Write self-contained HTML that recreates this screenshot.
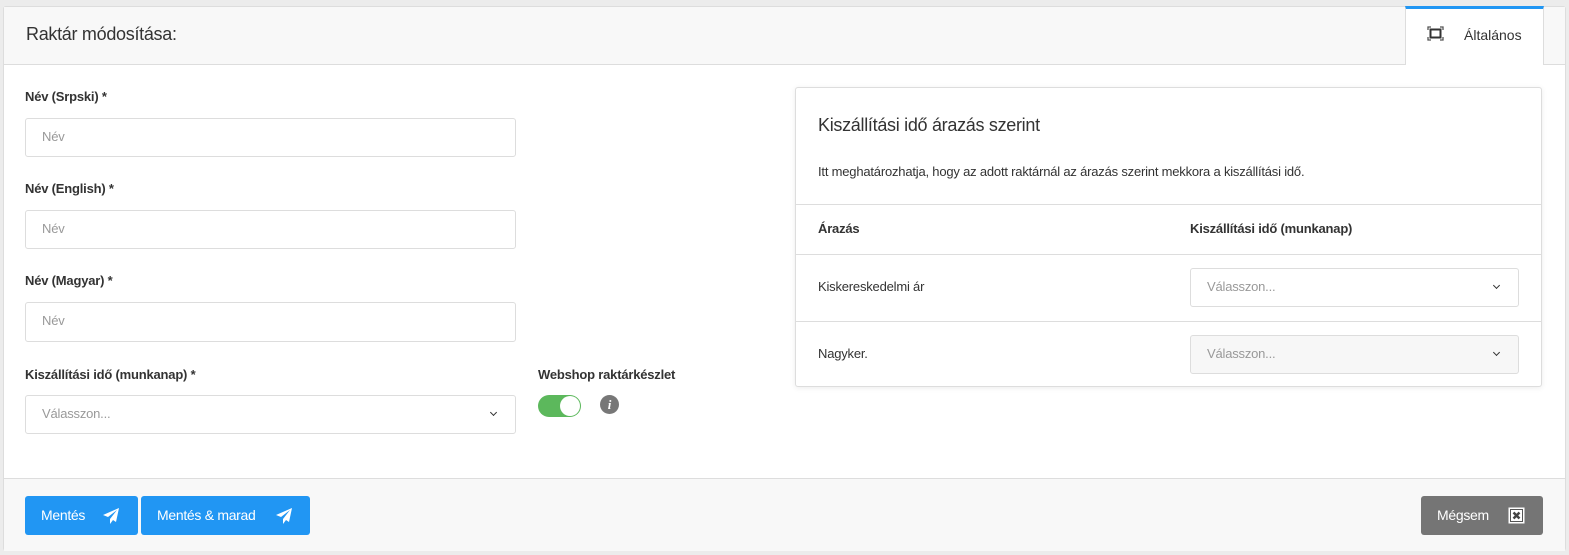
<!DOCTYPE html>
<html><head><meta charset="utf-8"><style>
*{box-sizing:border-box;margin:0;padding:0}
body{width:1569px;height:555px;background:#ececec;font-family:"Liberation Sans",sans-serif;color:#333;position:relative;overflow:hidden}
.card{position:absolute;left:3px;top:6px;width:1563px;height:545px;background:#fff;border:1px solid #ddd;border-radius:3px}
.hdr{position:absolute;left:0;top:0;width:100%;height:58px;background:#f8f8f8;border-bottom:1px solid #ddd}
.ttl{position:absolute;left:22px;top:17px;font-size:18px;color:#333;letter-spacing:-0.3px}
.tab{position:absolute;left:1401px;top:-1px;width:139px;height:59px;background:#fff;border-top:3px solid #2196f3;border-left:1px solid #ddd;border-right:1px solid #ddd}
.tab span{position:absolute;left:58px;top:18px;font-size:14px;color:#333}
.lbl{position:absolute;font-size:13px;font-weight:bold;color:#333;letter-spacing:-0.2px}
.inp{position:absolute;border:1px solid #ddd;border-radius:3px;background:#fff;font-size:13px;color:#999;padding-left:16px;line-height:36px;letter-spacing:-0.2px}
.chev{position:absolute;right:19px;top:14px;width:5px;height:5px;border-right:1.5px solid #333;border-bottom:1.5px solid #333;transform:rotate(45deg)}
.panel{position:absolute;left:791px;top:80px;width:747px;height:300px;border:1px solid #ddd;border-radius:3px;background:#fff;box-shadow:0 1px 6px rgba(0,0,0,.08)}
.hr{position:absolute;left:0;width:100%;border-top:1px solid #ddd}
.ftr{position:absolute;left:0;top:471px;width:100%;height:73px;background:#f8f8f8;border-top:1px solid #ddd}
.btn{position:absolute;top:17px;height:39px;background:#2196f3;color:#fff;font-size:14px;border-radius:3px;line-height:39px;padding-left:16px;letter-spacing:-0.3px}
</style></head><body>
<div class="card">
 <div class="hdr"><div class="ttl">Raktár módosítása:</div>
  <div class="tab">
   <svg style="position:absolute;left:21px;top:17px" width="17" height="15" viewBox="0 0 17 15"><path d="M1 4V1h3M13 1h3v3M16 11v3h-3M4 14H1v-3" fill="none" stroke="#555" stroke-width="1.3"/><rect x="3.5" y="3.5" width="10" height="8" fill="none" stroke="#333" stroke-width="2"/></svg>
   <span>Általános</span></div>
 </div>
 <div class="lbl" style="left:21px;top:82px">Név (Srpski) *</div>
 <div class="inp" style="left:21px;top:111px;width:491px;height:39px">Név</div>
 <div class="lbl" style="left:21px;top:174px">Név (English) *</div>
 <div class="inp" style="left:21px;top:203px;width:491px;height:39px">Név</div>
 <div class="lbl" style="left:21px;top:266px">Név (Magyar) *</div>
 <div class="inp" style="left:21px;top:295px;width:491px;height:40px">Név</div>
 <div class="lbl" style="left:21px;top:360px">Kiszállítási idő (munkanap) *</div>
 <div class="inp" style="left:21px;top:388px;width:491px;height:39px">Válasszon...<div class="chev"></div></div>
 <div class="lbl" style="left:534px;top:360px">Webshop raktárkészlet</div>
 <div style="position:absolute;left:534px;top:388px;width:43px;height:22px;border-radius:11px;background:#5cb85c"><div style="position:absolute;right:1px;top:1px;width:20px;height:20px;border-radius:50%;background:#fff"></div></div>
 <div style="position:absolute;left:596px;top:388px;width:19px;height:19px;border-radius:50%;background:#777;color:#fff;font:italic bold 13px 'Liberation Serif',serif;text-align:center;line-height:19px">i</div>
 <div class="panel">
  <div style="position:absolute;left:22px;top:27px;font-size:18px;color:#333;letter-spacing:-0.3px">Kiszállítási idő árazás szerint</div>
  <div style="position:absolute;left:22px;top:76px;font-size:13px;color:#333;letter-spacing:-0.2px">Itt meghatározhatja, hogy az adott raktárnál az árazás szerint mekkora a kiszállítási idő.</div>
  <div class="hr" style="top:116px"></div>
  <div class="lbl" style="left:22px;top:133px">Árazás</div>
  <div class="lbl" style="left:394px;top:133px">Kiszállítási idő (munkanap)</div>
  <div class="hr" style="top:166px"></div>
  <div style="position:absolute;left:22px;top:191px;font-size:13px;letter-spacing:-0.2px">Kiskereskedelmi ár</div>
  <div class="inp" style="left:394px;top:180px;width:329px;height:39px">Válasszon...<div class="chev"></div></div>
  <div class="hr" style="top:233px"></div>
  <div style="position:absolute;left:22px;top:258px;font-size:13px;letter-spacing:-0.2px">Nagyker.</div>
  <div class="inp" style="left:394px;top:247px;width:329px;height:39px;background:#f7f7f7">Válasszon...<div class="chev"></div></div>
 </div>
 <div class="ftr">
  <div class="btn" style="left:21px;width:113px">Mentés
   <svg style="position:absolute;left:77px;top:11px" width="18" height="18" viewBox="0 0 18 18"><path d="M17 1L1 8l5 2 9-7-7 9v5l3-4 3 2z" fill="#fff"/></svg></div>
  <div class="btn" style="left:137px;width:169px">Mentés &amp; marad
   <svg style="position:absolute;left:134px;top:11px" width="18" height="18" viewBox="0 0 18 18"><path d="M17 1L1 8l5 2 9-7-7 9v5l3-4 3 2z" fill="#fff"/></svg></div>
  <div class="btn" style="left:1417px;width:122px;background:#757575">Mégsem
   <svg style="position:absolute;left:87px;top:11px" width="17" height="17" viewBox="0 0 17 17"><rect x="0.5" y="0.5" width="16" height="16" fill="#fff"/><rect x="2.5" y="2.5" width="12" height="12" fill="#fff" stroke="#555" stroke-width="1"/><path d="M5.5 5.5l6 6M11.5 5.5l-6 6" stroke="#444" stroke-width="2.5"/></svg></div>
 </div>
</div>
</body></html>
